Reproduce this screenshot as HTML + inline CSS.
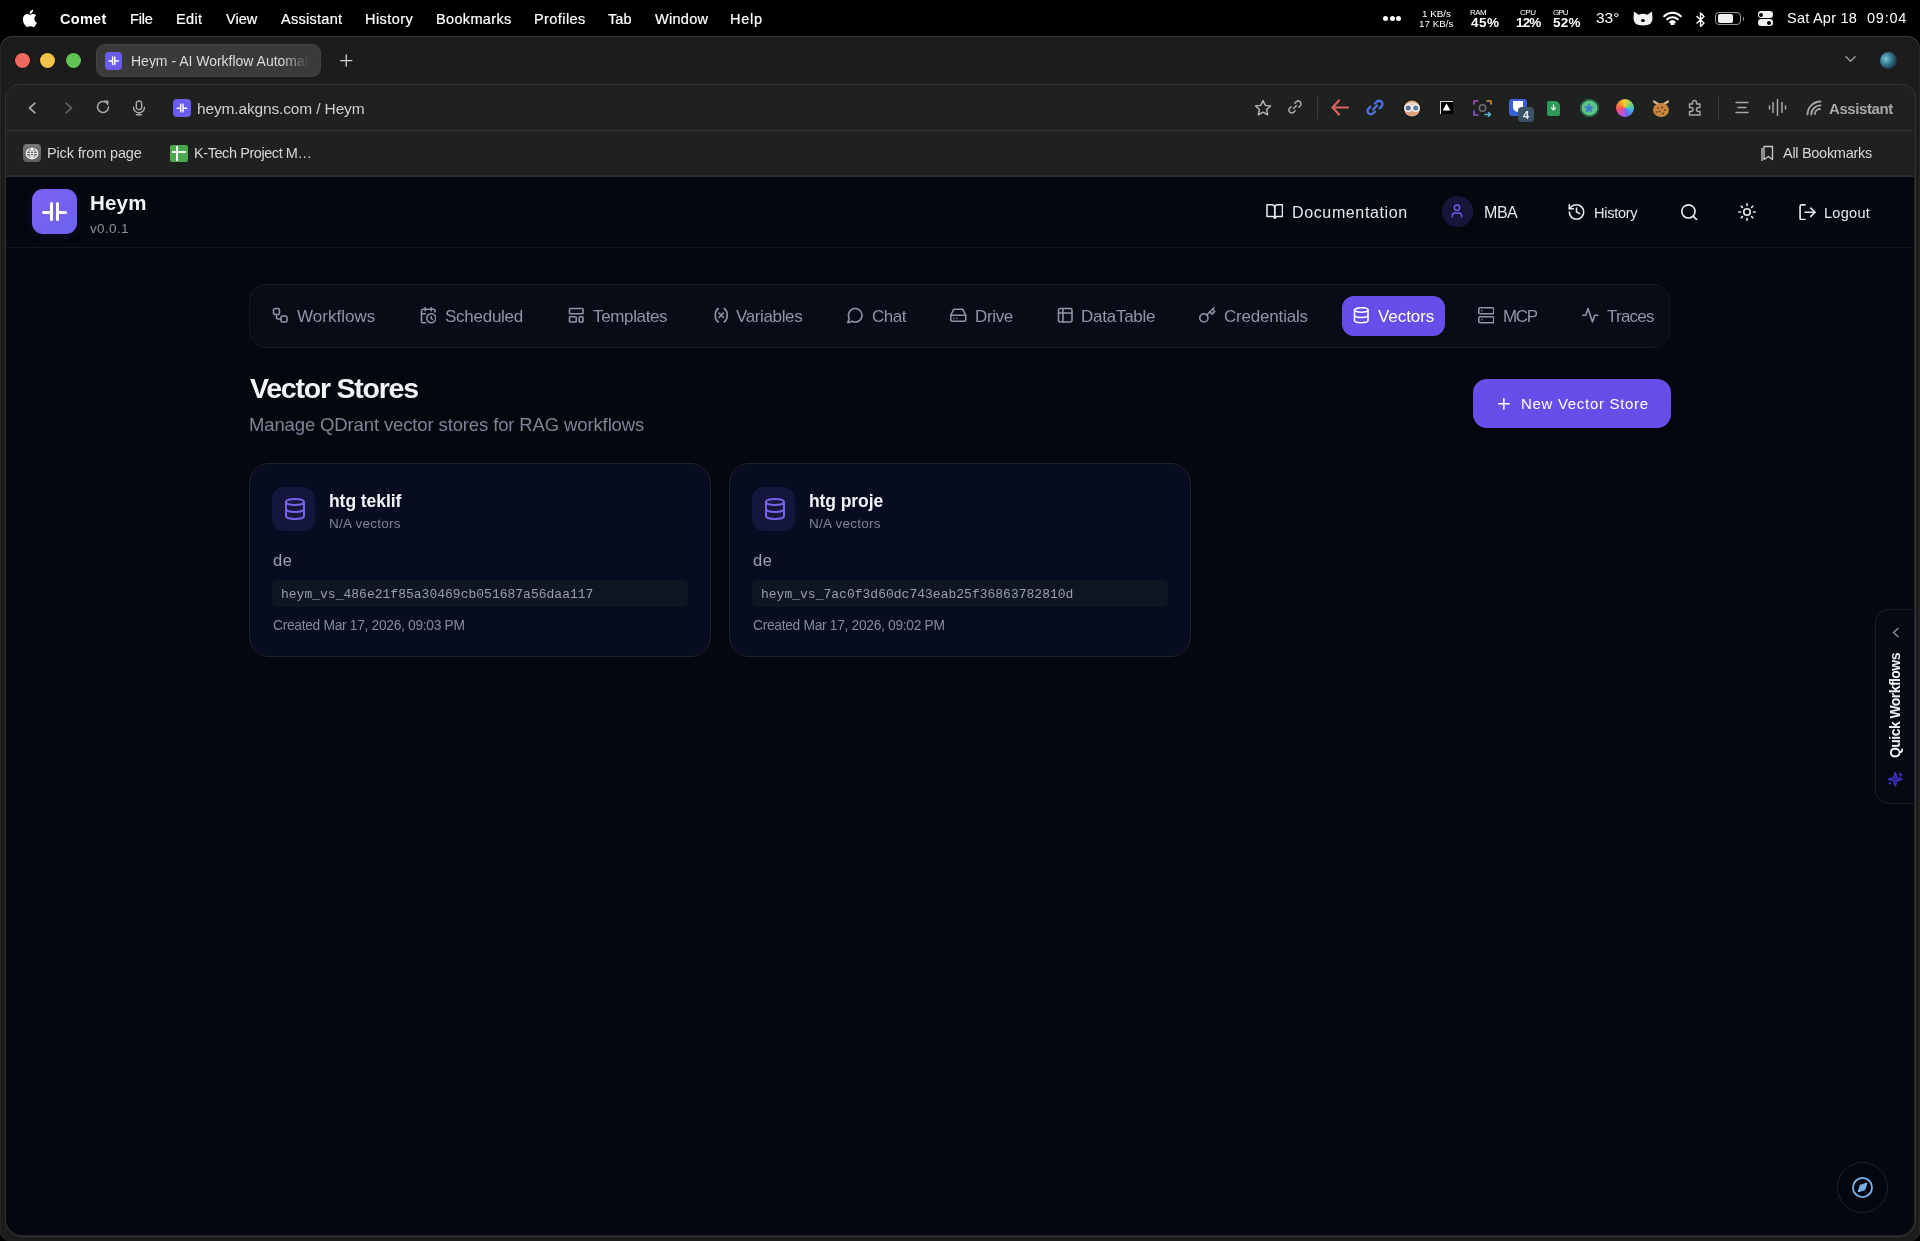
<!DOCTYPE html>
<html><head><meta charset="utf-8"><title>Heym</title>
<style>
*{box-sizing:border-box;margin:0;padding:0}
html,body{width:1920px;height:1241px;overflow:hidden;background:#000;font-family:"Liberation Sans",sans-serif}
.a{position:absolute}
.t{white-space:nowrap;will-change:transform}
</style></head><body>
<div class="a" style="left:0;top:0;width:1920px;height:37px;background:#000"></div>
<div class="a" style="left:0;top:36px;width:1920px;height:1205px;background:#1c1c1c;border-radius:13px 13px 9px 9px;box-shadow:inset 0 1px 0 #3a3a3a, inset 1px 0 0 #262626, inset -1px 0 0 #262626"></div>
<div class="a" style="left:95.5px;top:44px;width:225.5px;height:33px;background:#3a3a3a;border-radius:9px;box-shadow:inset 0 0 0 1px #424242"></div>
<div class="a" style="left:4.5px;top:84px;width:1911px;height:1153px;background:#1f2020;border:1.5px solid #333;border-radius:14px 14px 17px 17px"></div>
<div class="a" style="left:6px;top:130px;width:1908px;height:1px;background:#353535"></div>
<div class="a" style="left:6px;top:175px;width:1908px;height:1.5px;background:#2d2e35"></div>
<div class="a" style="left:6px;top:176.5px;width:1908px;height:1058.5px;background:#05070f;border-radius:0 0 16px 16px;overflow:hidden"></div>
<div class="a" style="left:6px;top:247px;width:1908px;height:1px;background:#121622"></div>
<svg class="a" style="left:21.6px;top:7.6px;width:16px;height:19px;" viewBox="0 0 16 22.5" fill="#fff" stroke="none" stroke-width="2" stroke-linecap="round" stroke-linejoin="round"><path d="M13.2 12.7c0-2.4 2-3.6 2.1-3.7-1.2-1.7-3-1.9-3.6-2-1.5-.2-3 .9-3.8.9-.8 0-2-.9-3.3-.9C2.9 7.1 1.3 8.1.5 9.7c-1.8 3.1-.5 7.7 1.3 10.2.9 1.2 1.9 2.6 3.2 2.6 1.3-.1 1.8-.8 3.3-.8 1.6 0 2 .8 3.3.8 1.4 0 2.3-1.3 3.1-2.5 1-1.4 1.4-2.8 1.4-2.9-.1 0-2.9-1.1-2.9-4.4zM10.7 5.3c.7-.9 1.2-2 1-3.2-1 0-2.3.7-3 1.6-.7.8-1.2 2-1.1 3.1 1.2.1 2.3-.6 3.1-1.5z"/></svg>
<div class="a" style="left:14.799999999999999px;top:52.8px;width:15.2px;height:15.2px;border-radius:50%;background:#ee6a5f;box-shadow:0 0 0 0.8px rgba(0,0,0,.45)"></div>
<div class="a" style="left:40.3px;top:52.8px;width:15.2px;height:15.2px;border-radius:50%;background:#f6c34a;box-shadow:0 0 0 0.8px rgba(0,0,0,.45)"></div>
<div class="a" style="left:65.80000000000001px;top:52.8px;width:15.2px;height:15.2px;border-radius:50%;background:#5fc454;box-shadow:0 0 0 0.8px rgba(0,0,0,.45)"></div>
<div class="a" style="left:104.5px;top:52px;width:17.5px;height:17.5px;border-radius:4px;background:#6b5cf0"></div>
<svg class="a" style="left:104.5px;top:52px;width:17.5px;height:17.5px;" viewBox="0 0 45 45" fill="none" stroke="#fff" stroke-width="3.6" stroke-linecap="round" stroke-linejoin="round"><path d="M19.5 13v19M25.25 13v19M10.5 23h9M25.25 23h9.2"/></svg>
<svg class="a" style="left:340px;top:53.5px;width:12.5px;height:13px;" viewBox="1 1 22 22" fill="none" stroke="#d8d8d8" stroke-width="2.2" stroke-linecap="round" stroke-linejoin="round"><path d="M12 2v20M2 12h20"/></svg>
<svg class="a" style="left:1844px;top:54px;width:13px;height:10px;" viewBox="0 0 14 11" fill="none" stroke="#9a9a9a" stroke-width="1.6" stroke-linecap="round" stroke-linejoin="round"><path d="M2 3l5 5 5-5"/></svg>
<div class="a" style="left:1880px;top:51.5px;width:17px;height:17px;border-radius:50%;background:radial-gradient(circle at 35% 40%,#7fc8d8 0%,#3a7f96 35%,#1c3d55 70%,#10202e 100%)"></div>
<svg class="a" style="left:27px;top:101.5px;width:10px;height:12px;" viewBox="0 0 10 12" fill="none" stroke="#a8a8a8" stroke-width="1.7" stroke-linecap="round" stroke-linejoin="round"><path d="M8 1.2L2.5 6 8 10.8"/></svg>
<svg class="a" style="left:63.5px;top:101.5px;width:10px;height:12px;" viewBox="0 0 10 12" fill="none" stroke="#5e5e5e" stroke-width="1.7" stroke-linecap="round" stroke-linejoin="round"><path d="M2 1.2L7.5 6 2 10.8"/></svg>
<svg class="a" style="left:95px;top:99px;width:16px;height:16px;" viewBox="0 0 16 16" fill="none" stroke="#a8a8a8" stroke-width="1.5" stroke-linecap="round" stroke-linejoin="round"><path d="M13.5 8A5.5 5.5 0 1 1 11.8 4"/><path d="M9.5 2.2h3.2v3.3" /></svg>
<svg class="a" style="left:132px;top:99.5px;width:14px;height:16px;" viewBox="0 0 14 16" fill="none" stroke="#a8a8a8" stroke-width="1.4" stroke-linecap="round" stroke-linejoin="round"><rect x="4.3" y="1" width="5.4" height="8.6" rx="2.7"/><path d="M1.5 7.3a5.5 5.5 0 0 0 11 0M7 12.8v2M4.5 14.8h5"/></svg>
<div class="a" style="left:173px;top:99px;width:18px;height:18px;border-radius:4px;background:#6b5cf0"></div>
<svg class="a" style="left:173px;top:99px;width:18px;height:18px;" viewBox="0 0 45 45" fill="none" stroke="#fff" stroke-width="3.6" stroke-linecap="round" stroke-linejoin="round"><path d="M19.5 13v19M25.25 13v19M10.5 23h9M25.25 23h9.2"/></svg>
<svg class="a" style="left:1254px;top:98.5px;width:18px;height:17px;" viewBox="0 0 18 17" fill="none" stroke="#b8b8b8" stroke-width="1.4" stroke-linecap="round" stroke-linejoin="round"><path d="M9 1.5l2.3 4.9 5.2.6-3.9 3.6 1.1 5.2L9 13.2l-4.7 2.6 1.1-5.2L1.5 7l5.2-.6z"/></svg>
<svg class="a" style="left:1287px;top:99px;width:16px;height:16px;" viewBox="0 0 16 16" fill="none" stroke="#a8a8a8" stroke-width="1.5" stroke-linecap="round" stroke-linejoin="round"><path d="M6.5 9.5l3-3"/><path d="M7.8 4.3l1.4-1.4a2.8 2.8 0 0 1 4 4l-1.4 1.4"/><path d="M8.2 11.7l-1.4 1.4a2.8 2.8 0 0 1-4-4l1.4-1.4"/></svg>
<div class="a" style="left:1317px;top:96px;width:1px;height:23px;background:#3a3a3a"></div>
<svg class="a" style="left:1330px;top:98px;width:20px;height:19px;" viewBox="0 0 20 19" fill="none" stroke="#e0625e" stroke-width="2.2" stroke-linecap="round" stroke-linejoin="round"><path d="M18 9.5H3M9 2.5L2.5 9.5 9 16.5"/></svg>
<svg class="a" style="left:1365px;top:98px;width:20px;height:19px;" viewBox="0 0 20 19" fill="none" stroke="#4f74e0" stroke-width="2.3" stroke-linecap="round" stroke-linejoin="round"><path d="M8 11.5l4-4"/><path d="M10 5.5l1.8-1.8a3.3 3.3 0 0 1 4.7 4.7L14.7 10.2"/><path d="M10 13.5l-1.8 1.8a3.3 3.3 0 0 1-4.7-4.7L5.3 8.8"/></svg>
<svg class="a" style="left:1401.5px;top:98px;width:20px;height:20px;" viewBox="0 0 20 20" fill="none" stroke="none" stroke-width="2" stroke-linecap="round" stroke-linejoin="round"><circle cx="10" cy="10" r="9.3" fill="#201a14"/><circle cx="10" cy="10.5" r="8" fill="#d9a57c"/><path d="M4 6.5Q10 1.5 16 6.5" fill="#e6dcc8" stroke="none"/><circle cx="6.3" cy="10" r="3.3" fill="#5a6a8a" stroke="#f0f0f4" stroke-width="1.6"/><circle cx="13.7" cy="10" r="3.3" fill="#5a7a9a" stroke="#f0f0f4" stroke-width="1.6"/></svg>
<div class="a" style="left:1439.5px;top:100.5px;width:13px;height:13px;background:#000;border-top:1px solid #ddd;border-left:1px solid #ddd"></div>
<svg class="a" style="left:1442px;top:103px;width:9px;height:8px;" viewBox="0 0 9 8" fill="#fff" stroke="none" stroke-width="2" stroke-linecap="round" stroke-linejoin="round"><path d="M4.5 0.5L8.5 7.5H0.5z"/></svg>
<svg class="a" style="left:1473px;top:99px;width:19px;height:18px;" viewBox="0 0 19 18" fill="none" stroke="#888" stroke-width="1.6" stroke-linecap="round" stroke-linejoin="round"><path d="M1 5V2h4" stroke="#b04fd0"/><path d="M14 2h4v3" stroke="#e08a3a"/><path d="M1 12v4h4" stroke="#8a5ad0"/><circle cx="9.5" cy="9" r="3.2" stroke="#6a6a7a"/><path d="M12 15.5h5.5M15.5 13.5l2 2-2 2" stroke="#5ab0d0"/></svg>
<div class="a" style="left:1509px;top:99px;width:18px;height:17px;border-radius:3px;background:#3b5fd6"></div>
<div class="a" style="left:1513px;top:101px;width:10px;height:11px;border-radius:0 0 5px 5px;background:#fff"></div>
<div class="a" style="left:1517.5px;top:107px;width:16px;height:15px;border-radius:4px;background:#3c5266"></div>
<div class="a" style="left:1546.5px;top:100.5px;width:13px;height:15px;border-radius:2px 5px 2px 2px;background:#2e9a5a"></div>
<svg class="a" style="left:1549.5px;top:104px;width:7px;height:8px;" viewBox="0 0 7 8" fill="none" stroke="#dff5e6" stroke-width="1.3" stroke-linecap="round" stroke-linejoin="round"><path d="M3.5 1v5M1.5 4l2 2 2-2"/></svg>
<div class="a" style="left:1579.5px;top:99px;width:19px;height:18px;border-radius:50%;background:#5cc489;box-shadow:inset 0 0 0 1.5px #1f5a3a"></div>
<svg class="a" style="left:1583px;top:102px;width:12px;height:12px;" viewBox="0 0 12 12" fill="#3a7fd0" stroke="none" stroke-width="2" stroke-linecap="round" stroke-linejoin="round"><path d="M6 1l1.6 3.2 3.4.5-2.5 2.4.6 3.4L6 8.9 2.9 10.5l.6-3.4L1 4.7l3.4-.5z"/></svg>
<div class="a" style="left:1615.5px;top:99px;width:18px;height:18px;border-radius:50%;background:conic-gradient(#f4d03f,#7ed957,#3fb7e8,#5b6ee8,#c04fd8,#f0506e,#f28c28,#f4d03f)"></div>
<svg class="a" style="left:1651px;top:98px;width:20px;height:20px;" viewBox="0 0 20 20" fill="none" stroke="none" stroke-width="2" stroke-linecap="round" stroke-linejoin="round"><path d="M3 3.5L10 8 17 3.5" stroke="#d8b890" stroke-width="2.2" fill="none"/><ellipse cx="10" cy="12" rx="8" ry="7" fill="#c98642"/><g fill="#7a4a1e"><circle cx="7" cy="10" r="1.1"/><circle cx="11" cy="9.5" r="1.1"/><circle cx="14" cy="12" r="1.1"/><circle cx="8.5" cy="13.5" r="1.1"/><circle cx="12" cy="15.5" r="1.1"/><circle cx="5.5" cy="14" r="1"/></g></svg>
<svg class="a" style="left:1686px;top:99px;width:18px;height:18px;" viewBox="0 0 18 18" fill="none" stroke="#a8a8a8" stroke-width="1.4" stroke-linecap="round" stroke-linejoin="round"><path d="M6.5 3.5a2 2 0 0 1 4 0V5H14v3.5h-1.5a2 2 0 0 0 0 4H14V16H3.5v-3.5H5a2 2 0 0 0 0-4H3.5V5h3z"/></svg>
<div class="a" style="left:1718px;top:96px;width:1px;height:23px;background:#3a3a3a"></div>
<svg class="a" style="left:1735px;top:101px;width:14px;height:13px;" viewBox="0 0 14 13" fill="none" stroke="#a8a8a8" stroke-width="1.5" stroke-linecap="round" stroke-linejoin="round"><path d="M1 1.5h12M3 6.5h8M1 11.5h12"/></svg>
<svg class="a" style="left:1768px;top:98px;width:19px;height:19px;" viewBox="0 0 19 19" fill="none" stroke="#a8a8a8" stroke-width="1.5" stroke-linecap="round" stroke-linejoin="round"><path d="M1.5 8v3M5 4.5v10M9.5 1.5v16M14 4.5v10M17.5 8v3"/></svg>
<svg class="a" style="left:1805px;top:99px;width:17px;height:17px;" viewBox="0 0 17 17" fill="none" stroke="#a8a8a8" stroke-width="1.8" stroke-linecap="round" stroke-linejoin="round"><path d="M2.5 15.5A13 13 0 0 1 15.5 2.5"/><path d="M6.3 15.5A9.2 9.2 0 0 1 15.5 6.3"/><path d="M10 15A5 5 0 0 1 15 10"/></svg>
<div class="a" style="left:23px;top:144px;width:18px;height:18px;border-radius:4px;background:linear-gradient(#777,#5c5c5c)"></div>
<svg class="a" style="left:25px;top:146.5px;width:14px;height:13px;" viewBox="0 0 14 13" fill="none" stroke="#f0f0f0" stroke-width="1.1" stroke-linecap="round" stroke-linejoin="round"><ellipse cx="7" cy="6.5" rx="5.8" ry="5.3"/><path d="M1.2 6.5h11.6M7 1.2c-2.2 2.8-2.2 7.8 0 10.6M7 1.2c2.2 2.8 2.2 7.8 0 10.6M1.8 4h10.4M1.8 9h10.4"/></svg>
<div class="a" style="left:170px;top:144.5px;width:17.5px;height:17.5px;border-radius:2px;background:#4aa94f"></div>
<div class="a" style="left:171.5px;top:151px;width:14.5px;height:1.8px;background:#f2f8f2"></div>
<div class="a" style="left:176.2px;top:146px;width:1.8px;height:14.5px;background:#f2f8f2"></div>
<svg class="a" style="left:1761px;top:145px;width:13px;height:16px;" viewBox="0 0 13 16" fill="none" stroke="#c8c8c8" stroke-width="1.3" stroke-linecap="round" stroke-linejoin="round"><path d="M3 1.5h8.5v13L7.5 11.5 3 14.5z"/><path d="M1 3.5v12.5"/></svg>
<div class="a" style="left:32px;top:189px;width:45px;height:45px;border-radius:11px;background:linear-gradient(135deg,#7f62f2,#6a62ee);box-shadow:0 2px 8px rgba(100,80,240,.12)"></div>
<div class="a" style="left:50px;top:202px;width:3px;height:19px;background:#fff;border-radius:1.5px"></div>
<div class="a" style="left:56px;top:202px;width:3px;height:19px;background:#fff;border-radius:1.5px"></div>
<div class="a" style="left:42px;top:210.5px;width:9px;height:3px;background:#fff;border-radius:1.5px"></div>
<div class="a" style="left:57px;top:210.5px;width:10px;height:3px;background:#fff;border-radius:1.5px"></div>
<svg class="a" style="left:1265.5px;top:203.5px;width:17.5px;height:15.5px;" viewBox="1 2 22 20" fill="none" stroke="#e6e8ee" stroke-width="2" stroke-linecap="round" stroke-linejoin="round"><path d="M2 3h6a4 4 0 0 1 4 4v14a3 3 0 0 0-3-3H2z"/><path d="M22 3h-6a4 4 0 0 0-4 4v14a3 3 0 0 1 3-3h7z"/></svg>
<div class="a" style="left:1441.5px;top:195.5px;width:31.5px;height:31.5px;border-radius:50%;background:#17153a"></div>
<svg class="a" style="left:1449px;top:203px;width:16px;height:16px;" viewBox="0 0 24 24" fill="none" stroke="#6c5ce7" stroke-width="2" stroke-linecap="round" stroke-linejoin="round"><path d="M19 21v-2a4 4 0 0 0-4-4H9a4 4 0 0 0-4 4v2"/><circle cx="12" cy="7" r="4"/></svg>
<svg class="a" style="left:1567.5px;top:204px;width:17px;height:16px;" viewBox="2 2 20 20" fill="none" stroke="#e6e8ee" stroke-width="2" stroke-linecap="round" stroke-linejoin="round"><path d="M3 12a9 9 0 1 0 9-9 9.75 9.75 0 0 0-6.74 2.74L3 8"/><path d="M3 3v5h5"/><path d="M12 7v5l4 2"/></svg>
<svg class="a" style="left:1681px;top:203.5px;width:16.5px;height:16.5px;" viewBox="2 2 20 20" fill="none" stroke="#e6e8ee" stroke-width="2" stroke-linecap="round" stroke-linejoin="round"><circle cx="11" cy="11" r="8"/><path d="m21 21-4.3-4.3"/></svg>
<svg class="a" style="left:1738px;top:202.5px;width:18px;height:18px;" viewBox="1 1 22 22" fill="none" stroke="#e6e8ee" stroke-width="2" stroke-linecap="round" stroke-linejoin="round"><circle cx="12" cy="12" r="4"/><path d="M12 2v2"/><path d="M12 20v2"/><path d="m4.93 4.93 1.41 1.41"/><path d="m17.66 17.66 1.41 1.41"/><path d="M2 12h2"/><path d="M20 12h2"/><path d="m6.34 17.66-1.41 1.41"/><path d="m19.07 4.93-1.41 1.41"/></svg>
<svg class="a" style="left:1799px;top:203.5px;width:17px;height:16.5px;" viewBox="2 2 20 20" fill="none" stroke="#e6e8ee" stroke-width="2" stroke-linecap="round" stroke-linejoin="round"><path d="M9 21H5a2 2 0 0 1-2-2V5a2 2 0 0 1 2-2h4"/><polyline points="16 17 21 12 16 7"/><line x1="21" x2="9" y1="12" y2="12"/></svg>
<div class="a" style="left:249px;top:283.5px;width:1421px;height:64.5px;border-radius:17px;background:#080c17;border:1px solid #131827"></div>
<div class="a" style="left:1341.5px;top:295.5px;width:103.5px;height:40px;border-radius:12px;background:#674ee8"></div>
<svg class="a" style="left:272.25px;top:307px;width:16.5px;height:16.5px;" viewBox="1 1 22 22" fill="none" stroke="#8f95a6" stroke-width="2.1" stroke-linecap="round" stroke-linejoin="round"><rect width="8" height="8" x="3" y="3" rx="2"/><path d="M7 11v4a2 2 0 0 0 2 2h4"/><rect width="8" height="8" x="13" y="13" rx="2"/></svg>
<svg class="a" style="left:419.75px;top:307px;width:16.5px;height:16.5px;" viewBox="1 1 22 22" fill="none" stroke="#8f95a6" stroke-width="2.1" stroke-linecap="round" stroke-linejoin="round"><path d="M21 7.5V6a2 2 0 0 0-2-2H5a2 2 0 0 0-2 2v14a2 2 0 0 0 2 2h3.5"/><path d="M16 2v4"/><path d="M8 2v4"/><path d="M3 10h5"/><path d="M17.5 17.5 16 16.3V14"/><circle cx="16" cy="16" r="6"/></svg>
<svg class="a" style="left:567.65px;top:307px;width:16.5px;height:16.5px;" viewBox="1 1 22 22" fill="none" stroke="#8f95a6" stroke-width="2.1" stroke-linecap="round" stroke-linejoin="round"><rect width="18" height="7" x="3" y="3" rx="1"/><rect width="9" height="7" x="3" y="14" rx="1"/><rect width="5" height="7" x="16" y="14" rx="1"/></svg>
<svg class="a" style="left:712.65px;top:307px;width:16.5px;height:16.5px;" viewBox="1 1 22 22" fill="none" stroke="#8f95a6" stroke-width="2.1" stroke-linecap="round" stroke-linejoin="round"><path d="M8 21s-4-3-4-9 4-9 4-9"/><path d="M16 3s4 3 4 9-4 9-4 9"/><line x1="15" x2="9" y1="9" y2="15"/><line x1="9" x2="15" y1="9" y2="15"/></svg>
<svg class="a" style="left:847.05px;top:307px;width:16.5px;height:16.5px;" viewBox="1 1 22 22" fill="none" stroke="#8f95a6" stroke-width="2.1" stroke-linecap="round" stroke-linejoin="round"><path d="M7.9 20A9 9 0 1 0 4 16.1L2 22Z"/></svg>
<svg class="a" style="left:950.25px;top:307px;width:16.5px;height:16.5px;" viewBox="1 1 22 22" fill="none" stroke="#8f95a6" stroke-width="2.1" stroke-linecap="round" stroke-linejoin="round"><line x1="22" x2="2" y1="12" y2="12"/><path d="M5.45 5.11 2 12v6a2 2 0 0 0 2 2h16a2 2 0 0 0 2-2v-6l-3.45-6.89A2 2 0 0 0 16.76 4H7.24a2 2 0 0 0-1.79 1.11z"/><line x1="6" x2="6.01" y1="16" y2="16"/><line x1="10" x2="10.01" y1="16" y2="16"/></svg>
<svg class="a" style="left:1057.25px;top:307px;width:16.5px;height:16.5px;" viewBox="1 1 22 22" fill="none" stroke="#8f95a6" stroke-width="2.1" stroke-linecap="round" stroke-linejoin="round"><rect width="18" height="18" x="3" y="3" rx="2"/><path d="M3 9h18"/><path d="M9 3v18"/></svg>
<svg class="a" style="left:1199.25px;top:307px;width:16.5px;height:16.5px;" viewBox="1 1 22 22" fill="none" stroke="#8f95a6" stroke-width="2.1" stroke-linecap="round" stroke-linejoin="round"><circle cx="7.5" cy="15.5" r="5.5"/><path d="m21 2-9.6 9.6"/><path d="m15.5 7.5 3 3L22 7l-3-3"/></svg>
<svg class="a" style="left:1353.15px;top:307px;width:16.5px;height:16.5px;" viewBox="1 1 22 22" fill="none" stroke="#ffffff" stroke-width="2.1" stroke-linecap="round" stroke-linejoin="round"><ellipse cx="12" cy="5" rx="9" ry="3"/><path d="M3 5V19A9 3 0 0 0 21 19V5"/><path d="M3 12A9 3 0 0 0 21 12"/></svg>
<svg class="a" style="left:1477.95px;top:307px;width:16.5px;height:16.5px;" viewBox="1 1 22 22" fill="none" stroke="#8f95a6" stroke-width="2.1" stroke-linecap="round" stroke-linejoin="round"><rect width="20" height="8" x="2" y="2" rx="2" ry="2"/><rect width="20" height="8" x="2" y="14" rx="2" ry="2"/><line x1="6" x2="6.01" y1="6" y2="6"/><line x1="6" x2="6.01" y1="18" y2="18"/></svg>
<svg class="a" style="left:1582.15px;top:307px;width:16.5px;height:16.5px;" viewBox="1 1 22 22" fill="none" stroke="#8f95a6" stroke-width="2.1" stroke-linecap="round" stroke-linejoin="round"><path d="M22 12h-4l-3 9L9 3l-3 9H2"/></svg>
<div class="a" style="left:1473px;top:379px;width:198px;height:49px;border-radius:14px;background:#674ee8"></div>
<svg class="a" style="left:1498px;top:398px;width:11.7px;height:11.7px;" viewBox="4 4 16 16" fill="none" stroke="#fff" stroke-width="2.1" stroke-linecap="round" stroke-linejoin="round"><path d="M5 12h14"/><path d="M12 5v14"/></svg>
<div class="a" style="left:249.25px;top:463px;width:461.5px;height:193.5px;border-radius:20px;background:#070c20;border:1px solid #1c2134"></div>
<div class="a" style="left:272.25px;top:486.5px;width:43px;height:44px;border-radius:12px;background:#15163b"></div>
<svg class="a" style="left:283.5px;top:497.5px;width:22px;height:22px;" viewBox="1 1 22 22" fill="none" stroke="#7563e8" stroke-width="2" stroke-linecap="round" stroke-linejoin="round"><ellipse cx="12" cy="5" rx="9" ry="3"/><path d="M3 5V19A9 3 0 0 0 21 19V5"/><path d="M3 12A9 3 0 0 0 21 12"/></svg>
<div class="a" style="left:272.25px;top:580px;width:415.5px;height:26.5px;border-radius:5px;background:#101523"></div>
<div class="a" style="left:729.25px;top:463px;width:461.5px;height:193.5px;border-radius:20px;background:#070c20;border:1px solid #1c2134"></div>
<div class="a" style="left:752.25px;top:486.5px;width:43px;height:44px;border-radius:12px;background:#15163b"></div>
<svg class="a" style="left:763.5px;top:497.5px;width:22px;height:22px;" viewBox="1 1 22 22" fill="none" stroke="#7563e8" stroke-width="2" stroke-linecap="round" stroke-linejoin="round"><ellipse cx="12" cy="5" rx="9" ry="3"/><path d="M3 5V19A9 3 0 0 0 21 19V5"/><path d="M3 12A9 3 0 0 0 21 12"/></svg>
<div class="a" style="left:752.25px;top:580px;width:415.5px;height:26.5px;border-radius:5px;background:#101523"></div>
<div class="a" style="left:1874.5px;top:608.5px;width:39.5px;height:195px;border-radius:14px 0 0 14px;background:#060912;border:1px solid #181d2a;border-right:none"></div>
<svg class="a" style="left:1891px;top:627px;width:9px;height:11px;" viewBox="0 0 9 11" fill="none" stroke="#8a90a0" stroke-width="1.5" stroke-linecap="round" stroke-linejoin="round"><path d="M7 1.5L2.5 5.5 7 9.5"/></svg>
<svg class="a" style="left:1888px;top:772px;width:14.5px;height:14.5px;" viewBox="1 1 22 22" fill="#2a2290" stroke="#3a2fc0" stroke-width="2.2" stroke-linecap="round" stroke-linejoin="round"><path d="M9.937 15.5A2 2 0 0 0 8.5 14.063l-6.135-1.582a.5.5 0 0 1 0-.962L8.5 9.936A2 2 0 0 0 9.937 8.5l1.582-6.135a.5.5 0 0 1 .963 0L14.063 8.5A2 2 0 0 0 15.5 9.937l6.135 1.581a.5.5 0 0 1 0 .964L15.5 14.063a2 2 0 0 0-1.437 1.437l-1.582 6.135a.5.5 0 0 1-.963 0z"/><path d="M20 3v4"/><path d="M22 5h-4"/><path d="M4 17v2"/><path d="M5 18H3"/></svg>
<div class="a" style="left:1836.5px;top:1161.5px;width:51.5px;height:51.5px;border-radius:50%;background:#04060d;border:1px solid #1c2232"></div>
<svg class="a" style="left:1851.5px;top:1177px;width:21px;height:21px;" viewBox="1 1 22 22" fill="none" stroke="#79b0e8" stroke-width="1.9" stroke-linecap="round" stroke-linejoin="round"><circle cx="12" cy="12" r="10"/><polygon points="16.24 7.76 14.12 14.12 7.76 16.24 9.88 9.88 16.24 7.76" fill="#79b0e8" stroke-width="1.6"/></svg>
<div class="a" style="left:1383.4px;top:16.2px;width:5px;height:5px;border-radius:50%;background:#fff"></div>
<div class="a" style="left:1389.7px;top:16.2px;width:5px;height:5px;border-radius:50%;background:#fff"></div>
<div class="a" style="left:1396.0px;top:16.2px;width:5px;height:5px;border-radius:50%;background:#fff"></div>
<svg class="a" style="left:1631.5px;top:10px;width:22.5px;height:16px;" viewBox="0 0 22.5 16" fill="#f2f2f2" stroke="none" stroke-width="2" stroke-linecap="round" stroke-linejoin="round"><path d="M2 1.5l4.5 3.2Q11 3 15.5 4.7L20 1.5 20.5 8Q21 15.5 11 15.5 1 15.5 1.5 8z"/></svg>
<div class="a" style="left:1640.5px;top:18.5px;width:4.5px;height:3.5px;border-radius:50%;background:#000"></div>
<svg class="a" style="left:1663px;top:11px;width:19px;height:14px;" viewBox="0 0 19 14" fill="none" stroke="#fff" stroke-width="2" stroke-linecap="round" stroke-linejoin="round"><path d="M1.2 5.2a12 12 0 0 1 16.6 0" /><path d="M4.2 8.3a7.6 7.6 0 0 1 10.6 0"/><path d="M7.2 11.2a3.4 3.4 0 0 1 4.6 0"/><circle cx="9.5" cy="12.8" r="1" fill="#fff"/></svg>
<svg class="a" style="left:1694.5px;top:11.5px;width:11px;height:15.5px;" viewBox="0 0 11 15.5" fill="none" stroke="#fff" stroke-width="1.4" stroke-linecap="round" stroke-linejoin="round"><path d="M2 4.5l7 6.5-3.5 3.5V1l3.5 3.5-7 6.5"/></svg>
<div class="a" style="left:1715.3px;top:12px;width:26px;height:13px;border-radius:4px;border:1.2px solid #9a9a9a"></div>
<div class="a" style="left:1717.5px;top:14.2px;width:15px;height:8.6px;border-radius:2px;background:#f2f2f2"></div>
<div class="a" style="left:1742.5px;top:16.5px;width:1.6px;height:4px;border-radius:0 1px 1px 0;background:#9a9a9a"></div>
<div class="a" style="left:1757.5px;top:11.3px;width:15px;height:6.5px;border-radius:3.3px;background:#f2f2f2"></div>
<div class="a" style="left:1759px;top:12.6px;width:4px;height:4px;border-radius:50%;background:#000"></div>
<div class="a" style="left:1757.5px;top:19.3px;width:15px;height:6.5px;border-radius:3.3px;background:#f2f2f2"></div>
<div class="a" style="left:1767px;top:20.6px;width:4px;height:4px;border-radius:50%;background:#000"></div>
<div class="a t" style="left:60.40px;top:11.51px;font-size:14.5px;line-height:14.5px;font-weight:700;color:#ffffff;letter-spacing:0.279px;">Comet</div>
<div class="a t" style="left:129.80px;top:11.51px;font-size:14.5px;line-height:14.5px;font-weight:400;color:#ffffff;letter-spacing:-0.200px;-webkit-text-stroke:0.2px #fff;">File</div>
<div class="a t" style="left:176.00px;top:11.51px;font-size:14.5px;line-height:14.5px;font-weight:400;color:#ffffff;letter-spacing:0.348px;-webkit-text-stroke:0.2px #fff;">Edit</div>
<div class="a t" style="left:225.75px;top:11.51px;font-size:14.5px;line-height:14.5px;font-weight:400;color:#ffffff;letter-spacing:0.018px;-webkit-text-stroke:0.2px #fff;">View</div>
<div class="a t" style="left:281.00px;top:11.51px;font-size:14.5px;line-height:14.5px;font-weight:400;color:#ffffff;letter-spacing:0.275px;-webkit-text-stroke:0.2px #fff;">Assistant</div>
<div class="a t" style="left:364.50px;top:11.51px;font-size:14.5px;line-height:14.5px;font-weight:400;color:#ffffff;letter-spacing:0.439px;-webkit-text-stroke:0.2px #fff;">History</div>
<div class="a t" style="left:436.00px;top:11.51px;font-size:14.5px;line-height:14.5px;font-weight:400;color:#ffffff;letter-spacing:0.341px;-webkit-text-stroke:0.2px #fff;">Bookmarks</div>
<div class="a t" style="left:533.50px;top:11.51px;font-size:14.5px;line-height:14.5px;font-weight:400;color:#ffffff;letter-spacing:0.414px;-webkit-text-stroke:0.2px #fff;">Profiles</div>
<div class="a t" style="left:608.00px;top:11.51px;font-size:14.5px;line-height:14.5px;font-weight:400;color:#ffffff;letter-spacing:0.093px;-webkit-text-stroke:0.2px #fff;">Tab</div>
<div class="a t" style="left:654.50px;top:11.51px;font-size:14.5px;line-height:14.5px;font-weight:400;color:#ffffff;letter-spacing:0.280px;-webkit-text-stroke:0.2px #fff;">Window</div>
<div class="a t" style="left:730.00px;top:11.51px;font-size:14.5px;line-height:14.5px;font-weight:400;color:#ffffff;letter-spacing:0.748px;-webkit-text-stroke:0.2px #fff;">Help</div>
<div class="a t" style="left:130.50px;top:53.70px;font-size:14px;line-height:14px;font-weight:400;color:#dcdcdc;letter-spacing:-0.010px;-webkit-mask-image:linear-gradient(90deg,#000 85%,transparent 100%);padding-right:0">Heym - AI Workflow Automat</div>
<div class="a t" style="left:197.00px;top:100.81px;font-size:15.5px;line-height:15.5px;font-weight:400;color:#cfcfcf;letter-spacing:-0.147px;">heym.akgns.com / Heym</div>
<div class="a t" style="left:1522.50px;top:110.01px;font-size:11px;line-height:11px;font-weight:700;color:#e8eef4;">4</div>
<div class="a t" style="left:1829.40px;top:100.71px;font-size:15px;line-height:15px;font-weight:700;color:#a8a8a8;letter-spacing:-0.403px;">Assistant</div>
<div class="a t" style="left:47.00px;top:146.01px;font-size:14.5px;line-height:14.5px;font-weight:400;color:#d6d6d6;letter-spacing:-0.149px;">Pick from page</div>
<div class="a t" style="left:193.50px;top:146.01px;font-size:14.5px;line-height:14.5px;font-weight:400;color:#d6d6d6;letter-spacing:-0.431px;">K-Tech Project M…</div>
<div class="a t" style="left:1783.30px;top:146.01px;font-size:14.5px;line-height:14.5px;font-weight:400;color:#d6d6d6;letter-spacing:-0.293px;">All Bookmarks</div>
<div class="a t" style="left:89.80px;top:193.01px;font-size:20.5px;line-height:20.5px;font-weight:700;color:#f5f6fa;letter-spacing:0.198px;">Heym</div>
<div class="a t" style="left:90.40px;top:221.51px;font-size:13.5px;line-height:13.5px;font-weight:400;color:#8a90a0;letter-spacing:0.326px;">v0.0.1</div>
<div class="a t" style="left:1292.00px;top:204.60px;font-size:16px;line-height:16px;font-weight:400;color:#e6e8ee;letter-spacing:0.632px;">Documentation</div>
<div class="a t" style="left:1483.90px;top:204.60px;font-size:16px;line-height:16px;font-weight:400;color:#e6e8ee;letter-spacing:-0.450px;">MBA</div>
<div class="a t" style="left:1593.70px;top:205.70px;font-size:14.5px;line-height:14.5px;font-weight:400;color:#e6e8ee;letter-spacing:-0.261px;">History</div>
<div class="a t" style="left:1824.20px;top:205.70px;font-size:14.5px;line-height:14.5px;font-weight:400;color:#e6e8ee;letter-spacing:0.296px;">Logout</div>
<div class="a t" style="left:297.00px;top:307.91px;font-size:17px;line-height:17px;font-weight:400;color:#8f95a6;letter-spacing:0.014px;">Workflows</div>
<div class="a t" style="left:444.70px;top:307.91px;font-size:17px;line-height:17px;font-weight:400;color:#8f95a6;letter-spacing:-0.261px;">Scheduled</div>
<div class="a t" style="left:592.80px;top:307.91px;font-size:17px;line-height:17px;font-weight:400;color:#8f95a6;letter-spacing:-0.360px;">Templates</div>
<div class="a t" style="left:736.30px;top:307.91px;font-size:17px;line-height:17px;font-weight:400;color:#8f95a6;letter-spacing:-0.364px;">Variables</div>
<div class="a t" style="left:872.20px;top:307.91px;font-size:17px;line-height:17px;font-weight:400;color:#8f95a6;letter-spacing:-0.495px;">Chat</div>
<div class="a t" style="left:974.70px;top:307.91px;font-size:17px;line-height:17px;font-weight:400;color:#8f95a6;letter-spacing:-0.354px;">Drive</div>
<div class="a t" style="left:1080.90px;top:307.91px;font-size:17px;line-height:17px;font-weight:400;color:#8f95a6;letter-spacing:-0.249px;">DataTable</div>
<div class="a t" style="left:1224.40px;top:307.91px;font-size:17px;line-height:17px;font-weight:400;color:#8f95a6;letter-spacing:-0.189px;">Credentials</div>
<div class="a t" style="left:1377.80px;top:307.91px;font-size:17px;line-height:17px;font-weight:400;color:#ffffff;letter-spacing:-0.066px;">Vectors</div>
<div class="a t" style="left:1502.50px;top:307.91px;font-size:17px;line-height:17px;font-weight:400;color:#8f95a6;letter-spacing:-1.369px;">MCP</div>
<div class="a t" style="left:1607.00px;top:307.91px;font-size:17px;line-height:17px;font-weight:400;color:#8f95a6;letter-spacing:-0.765px;">Traces</div>
<div class="a t" style="left:249.90px;top:374.31px;font-size:28.5px;line-height:28.5px;font-weight:700;color:#f4f5f8;letter-spacing:-1.225px;">Vector Stores</div>
<div class="a t" style="left:249.00px;top:415.61px;font-size:18.5px;line-height:18.5px;font-weight:400;color:#7d8496;letter-spacing:-0.130px;">Manage QDrant vector stores for RAG workflows</div>
<div class="a t" style="left:1521.20px;top:396.00px;font-size:15px;line-height:15px;font-weight:400;color:#ffffff;letter-spacing:0.695px;">New Vector Store</div>
<div class="a t" style="left:329.30px;top:493.11px;font-size:17.5px;line-height:17.5px;font-weight:700;color:#f4f5f8;letter-spacing:-0.065px;">htg teklif</div>
<div class="a t" style="left:329.30px;top:517.00px;font-size:13.5px;line-height:13.5px;font-weight:400;color:#7d8496;letter-spacing:0.248px;">N/A vectors</div>
<div class="a t" style="left:272.90px;top:552.01px;font-size:16.5px;line-height:16.5px;font-weight:400;color:#9aa1b2;letter-spacing:0.523px;">de</div>
<div class="a t" style="left:280.90px;top:588.01px;font-size:13px;line-height:13px;font-weight:400;color:#979eae;letter-spacing:0.009px;font-family:'Liberation Mono',monospace;">heym_vs_486e21f85a30469cb051687a56daa117</div>
<div class="a t" style="left:272.90px;top:618.61px;font-size:13.8px;line-height:13.8px;font-weight:400;color:#838a9b;letter-spacing:-0.308px;">Created Mar 17, 2026, 09:03 PM</div>
<div class="a t" style="left:809.30px;top:493.11px;font-size:17.5px;line-height:17.5px;font-weight:700;color:#f4f5f8;letter-spacing:-0.078px;">htg proje</div>
<div class="a t" style="left:809.30px;top:517.00px;font-size:13.5px;line-height:13.5px;font-weight:400;color:#7d8496;letter-spacing:0.248px;">N/A vectors</div>
<div class="a t" style="left:752.90px;top:552.01px;font-size:16.5px;line-height:16.5px;font-weight:400;color:#9aa1b2;letter-spacing:0.523px;">de</div>
<div class="a t" style="left:760.90px;top:588.01px;font-size:13px;line-height:13px;font-weight:400;color:#979eae;letter-spacing:0.009px;font-family:'Liberation Mono',monospace;">heym_vs_7ac0f3d60dc743eab25f36863782810d</div>
<div class="a t" style="left:752.90px;top:618.61px;font-size:13.8px;line-height:13.8px;font-weight:400;color:#838a9b;letter-spacing:-0.308px;">Created Mar 17, 2026, 09:02 PM</div>
<div class="a t" style="left:1887.76px;top:757.90px;font-size:14px;line-height:14px;font-weight:700;color:#f0f2f6;letter-spacing:-0.560px;transform-origin:0 0;transform:rotate(-90deg);">Quick Workflows</div>
<div class="a t" style="left:1422.00px;top:8.91px;font-size:9.8px;line-height:9.8px;font-weight:400;color:#ffffff;letter-spacing:-0.012px;">1 KB/s</div>
<div class="a t" style="left:1419.20px;top:19.01px;font-size:9.8px;line-height:9.8px;font-weight:400;color:#ffffff;letter-spacing:0.015px;">17 KB/s</div>
<div class="a t" style="left:1469.90px;top:8.80px;font-size:8px;line-height:8px;font-weight:400;color:#ffffff;letter-spacing:-0.507px;">RAM</div>
<div class="a t" style="left:1470.60px;top:16.01px;font-size:13.5px;line-height:13.5px;font-weight:700;color:#ffffff;letter-spacing:0.542px;">45%</div>
<div class="a t" style="left:1519.80px;top:8.80px;font-size:8px;line-height:8px;font-weight:400;color:#ffffff;letter-spacing:-0.457px;">CPU</div>
<div class="a t" style="left:1515.60px;top:16.01px;font-size:13.5px;line-height:13.5px;font-weight:700;color:#ffffff;letter-spacing:-0.858px;">12%</div>
<div class="a t" style="left:1552.60px;top:8.80px;font-size:8px;line-height:8px;font-weight:400;color:#ffffff;letter-spacing:-0.929px;">GPU</div>
<div class="a t" style="left:1552.80px;top:16.01px;font-size:13.5px;line-height:13.5px;font-weight:700;color:#ffffff;letter-spacing:0.242px;">52%</div>
<div class="a t" style="left:1595.70px;top:9.81px;font-size:15.5px;line-height:15.5px;font-weight:400;color:#ffffff;">33°</div>
<div class="a t" style="left:1786.90px;top:11.11px;font-size:14.5px;line-height:14.5px;font-weight:400;color:#ffffff;letter-spacing:0.239px;">Sat Apr 18</div>
<div class="a t" style="left:1866.90px;top:11.11px;font-size:14.5px;line-height:14.5px;font-weight:400;color:#ffffff;letter-spacing:0.782px;">09:04</div>
</body></html>
